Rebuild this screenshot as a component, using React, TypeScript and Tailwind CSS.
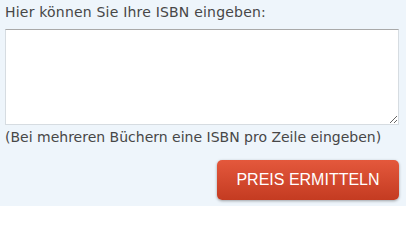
export default function App() {
  return (
    <div className="w-[406px] h-[206px] bg-[#eef5fb] px-[5px] pt-[2px] text-[#474747] font-['DejaVu_Sans',sans-serif]">
      <label className="block text-[14px] leading-[20px] tracking-[0.2px]">Hier können Sie Ihre ISBN eingeben:</label>
      <textarea className="mt-[7px] block w-[394px] h-[96px] bg-white border border-[#d6dce1] border-t-[#a9a9a9] resize-y outline-none" />
      <p className="mt-[2px] text-[14px] leading-[20px]">(Bei mehreren Büchern eine ISBN pro Zeile eingeben)</p>
      <div className="flex justify-end mt-[13px] pr-[2px]">
        <button className="w-[182px] h-[40px] rounded-[5px] bg-gradient-to-b from-[#e4583c] to-[#c43b21] text-white text-[16px] font-['Liberation_Sans',sans-serif] shadow-[0_1px_3px_rgba(0,0,0,0.35)]">
          PREIS ERMITTELN
        </button>
      </div>
    </div>
  );
}
